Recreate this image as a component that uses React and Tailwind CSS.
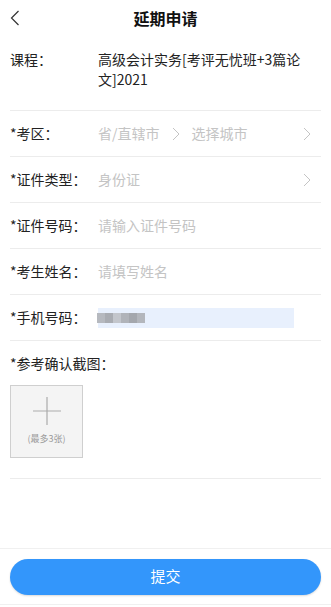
import React from "react";

const font = { fontFamily: '"Noto Sans CJK SC", "Noto Sans", sans-serif' };

function Chevron({ className }) {
  return (
    <svg className={className} width="8" height="14" viewBox="0 0 8 14" fill="none">
      <path d="M1 1l6 6-6 6" stroke="currentColor" strokeWidth="1" />
    </svg>
  );
}

function Row({ label, children, right }) {
  return (
    <div className="flex items-center h-[46px] border-b border-[#ececec]">
      <div className="w-[88px] shrink-0 text-[14px] text-[#222]">{label}</div>
      <div className="flex-1 flex items-center text-[14px] text-[#c4c4c4]">{children}</div>
      {right}
    </div>
  );
}

export default function App() {
  return (
    <div className="w-[331px] h-[607px] bg-white flex flex-col" style={font}>
      <div className="h-[36px] flex items-center relative">
        <svg className="absolute left-[10px] top-[10px] text-[#333]" width="10" height="16" viewBox="0 0 10 16" fill="none">
          <path d="M8.5 1L1.5 8l7 7" stroke="currentColor" strokeWidth="1.2" />
        </svg>
        <div className="w-full text-center text-[16px] font-bold text-[#111]">延期申请</div>
      </div>
      <div className="px-[10px] flex-1 flex flex-col">
        <div className="flex pt-[13px] pb-[21px] border-b border-[#ececec] text-[14px] text-[#222] leading-[20px]">
          <div className="w-[88px] shrink-0">课程：</div>
          <div className="flex-1 pr-[8px]">高级会计实务[考评无忧班+3篇论文]2021</div>
        </div>
        <Row label="*考区：" right={<Chevron className="text-[#c4c4c4] mr-[10px]" />}>
          <span>省/直辖市</span>
          <Chevron className="mx-[12px] text-[#c4c4c4]" />
          <span>选择城市</span>
        </Row>
        <Row label="*证件类型：" right={<Chevron className="text-[#c4c4c4] mr-[10px]" />}>
          <span>身份证</span>
        </Row>
        <Row label="*证件号码：">
          <span>请输入证件号码</span>
        </Row>
        <Row label="*考生姓名：">
          <span>请填写姓名</span>
        </Row>
        <Row label="*手机号码：">
          <div className="w-[196px] h-[20px] bg-[#e8f0fd] flex items-center">
            <div className="flex ml-[-1px]">
              <div className="w-[8px] h-[10px] bg-[#b6b9bf]" />
              <div className="w-[8px] h-[10px] bg-[#a9acb2]" />
              <div className="w-[8px] h-[10px] bg-[#c3c6cc]" />
              <div className="w-[8px] h-[10px] bg-[#b0b3b9]" />
              <div className="w-[8px] h-[10px] bg-[#a4a7ad]" />
              <div className="w-[8px] h-[10px] bg-[#b3b6bc]" />
            </div>
          </div>
        </Row>
        <div className="pt-[12px] pb-[20px] border-b border-[#ececec]">
          <div className="text-[14px] text-[#222] leading-[20px]">*参考确认截图：</div>
          <div className="mt-[12px] w-[73px] h-[73px] bg-[#f4f4f4] border border-[#cfcfcf] flex flex-col items-center">
            <svg className="mt-[11px]" width="28" height="28" viewBox="0 0 28 28">
              <path d="M14 0v28M0 14h28" stroke="#ababab" strokeWidth="1.2" />
            </svg>
            <div className="mt-[8px] text-[9px] text-[#9a9a9a] leading-[12px]">(最多3张)</div>
          </div>
        </div>
      </div>
      <div className="border-t border-[#f0f0f0] border-b h-[57px] flex items-center px-[10px] mb-[2px]">
        <div className="w-full h-[36px] rounded-full bg-[#3396fb] flex items-center justify-center text-white text-[15px] shadow-[0_1px_2px_rgba(0,0,0,0.15)]">
          提交
        </div>
      </div>
    </div>
  );
}
